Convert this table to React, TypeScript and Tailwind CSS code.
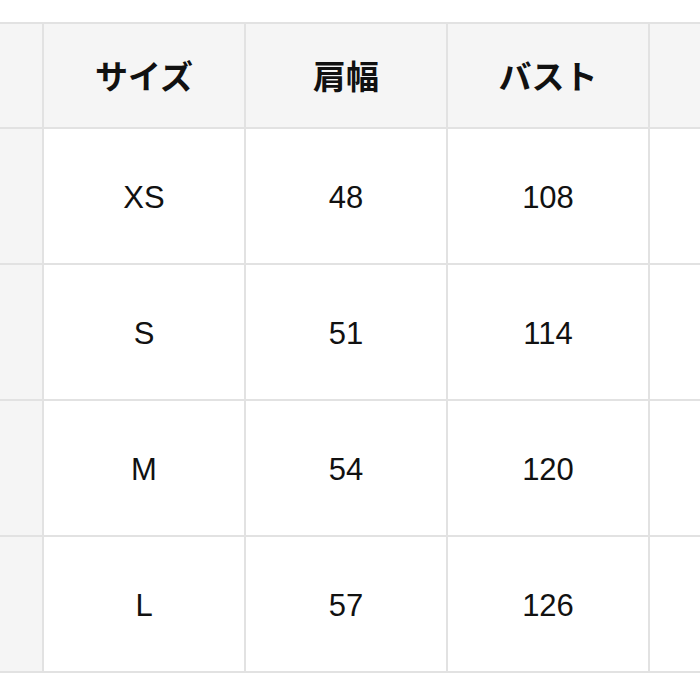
const headers = ["", "サイズ", "肩幅", "バスト", ""]

const rows = [
  ["", "XS", "48", "108", ""],
  ["", "S", "51", "114", ""],
  ["", "M", "54", "120", ""],
  ["", "L", "57", "126", ""],
]

export default function App() {
  return (
    <div className="w-[700px] h-[700px] overflow-hidden bg-white pt-[22px]">
      <div className="grid w-[850px] grid-cols-[42px_200px_200px_200px_200px] grid-rows-[103px_134px_134px_134px_134px] gap-[2px] py-[2px] bg-[#e2e2e2]">
        {headers.map((h, i) => (
          <div
            key={"h" + i}
            className="flex items-center justify-center bg-[#f5f5f5] text-[33px] font-bold text-[#111] [font-family:'Noto_Sans_CJK_JP',sans-serif]"
          >
            {h}
          </div>
        ))}
        {rows.map((r, ri) =>
          r.map((c, ci) => (
            <div
              key={ri + "-" + ci}
              className={
                "flex items-center justify-center pt-[4px] text-[31px] text-[#111] [font-family:'Liberation_Sans',Arial,sans-serif] " +
                (ci === 0 ? "bg-[#f5f5f5]" : "bg-white")
              }
            >
              {c}
            </div>
          )),
        )}
      </div>
    </div>
  )
}
